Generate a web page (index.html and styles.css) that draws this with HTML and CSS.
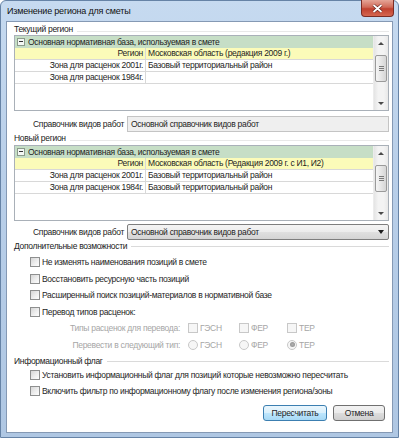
FILE: index.html
```html
<!DOCTYPE html>
<html lang="ru">
<head>
    <meta charset="UTF-8">
    <title>Изменение региона для сметы</title>
    <link rel="stylesheet" href="styles.css">
</head>
<body>
<div class="window">
    <!-- заголовок окна -->
    <div class="titlebar">
        <span class="title">Изменение региона для сметы</span>
        <div class="close">
            <svg width="11" height="9" viewBox="0 0 11 9"><path d="M1.5 1 L9.5 8 M9.5 1 L1.5 8" stroke="#5a1a14" stroke-width="3"/><path d="M1.5 1 L9.5 8 M9.5 1 L1.5 8" stroke="#fff" stroke-width="1.8"/></svg>
        </div>
    </div>

    <div class="client">
        <!-- Текущий регион -->
        <div class="group-title">Текущий регион</div>
        <div class="grid">
            <div class="grid-body">
                <div class="row head"><span class="toggle"></span>Основная нормативная база, используемая в смете</div>
                <div class="row yellow"><div class="key">Регион</div><div class="val">Московская область (редакция 2009 г.)</div></div>
                <div class="row"><div class="key">Зона для расценок 2001г.</div><div class="val">Базовый территориальный район</div></div>
                <div class="row"><div class="key">Зона для расценок 1984г.</div><div class="val"></div></div>
            </div>
            <div class="scrollbar">
                <div class="sb-btn"><span class="arrow-up"></span></div>
                <div class="sb-track"><div class="thumb"><span></span><span></span><span></span></div></div>
                <div class="sb-btn"><span class="arrow-down"></span></div>
            </div>
        </div>
        <div class="field-row">
            <span class="field-label">Справочник видов работ</span>
            <div class="textbox">Основной справочник видов работ</div>
        </div>

        <!-- Новый регион -->
        <div class="group-title tall">Новый регион</div>
        <div class="grid">
            <div class="grid-body">
                <div class="row head"><span class="toggle"></span>Основная нормативная база, используемая в смете</div>
                <div class="row yellow"><div class="key">Регион</div><div class="val">Московская область (Редакция 2009 г. с И1, И2)</div></div>
                <div class="row"><div class="key">Зона для расценок 2001г.</div><div class="val">Базовый территориальный район</div></div>
                <div class="row"><div class="key">Зона для расценок 1984г.</div><div class="val">Базовый территориальный район</div></div>
            </div>
            <div class="scrollbar">
                <div class="sb-btn"><span class="arrow-up"></span></div>
                <div class="sb-track"><div class="thumb"><span></span><span></span><span></span></div></div>
                <div class="sb-btn"><span class="arrow-down"></span></div>
            </div>
        </div>
        <div class="field-row combo-row">
            <span class="field-label">Справочник видов работ</span>
            <div class="combo">Основной справочник видов работ<span class="combo-arrow"></span></div>
        </div>

        <!-- Дополнительные возможности -->
        <div class="group-title line">Дополнительные возможности</div>
        <div class="checks">
            <div class="check"><span class="cb"></span>Не изменять наименования позиций в смете</div>
            <div class="check"><span class="cb"></span>Восстановить ресурсную часть позиций</div>
            <div class="check"><span class="cb"></span>Расширенный поиск позиций-материалов в нормативной базе</div>
            <div class="check"><span class="cb"></span>Перевод типов расценок:</div>
            <div class="check sub">
                <span class="sub-label">Типы расценок для перевода:</span>
                <span class="opt"><span class="cb off"></span>ГЭСН</span>
                <span class="opt narrow"><span class="cb off"></span>ФЕР</span>
                <span class="opt"><span class="cb off"></span>ТЕР</span>
            </div>
            <div class="check sub">
                <span class="sub-label">Перевести в следующий тип:</span>
                <span class="opt"><span class="radio"></span>ГЭСН</span>
                <span class="opt narrow"><span class="radio"></span>ФЕР</span>
                <span class="opt"><span class="radio on"></span>ТЕР</span>
            </div>
        </div>

        <!-- Информационный флаг -->
        <div class="group-title line flag">Информационный флаг</div>
        <div class="check low"><span class="cb"></span>Установить информационный флаг для позиций которые невозможно пересчитать</div>
        <div class="check low"><span class="cb"></span>Включить фильтр по информационному флагу после изменения региона/зоны</div>

        <div class="buttons">
            <button class="btn default">Пересчитать</button>
            <button class="btn">Отмена</button>
        </div>
    </div>
</div>
</body>
</html>
```

FILE: styles.css
```css
* {
    box-sizing: border-box;
}
body {
    margin: 0;
    font-family: "Liberation Sans", Arial, sans-serif;
    font-size: 8.5px;
    letter-spacing: -0.3px;
    color: #1e1e1e;
    background: #fff;
}
.window {
    width: 399px;
    height: 438px;
    border: 1px solid #6683a6;
    border-radius: 6px 6px 0 0;
    background: linear-gradient(#c6daf0, #b9cfe9 40%, #afc7e3);
    display: flex;
    flex-direction: column;
}
.titlebar {
    height: 20px;
    display: flex;
    align-items: flex-start;
    padding-left: 6px;
}
.title {
    font-size: 9px;
    letter-spacing: -0.2px;
    line-height: 20px;
    color: #111;
}
.close {
    margin-left: auto;
    margin-right: 4px;
    margin-top: -1px;
    width: 33px;
    height: 17px;
    border: 1px solid #7b2c24;
    border-top: none;
    border-radius: 0 0 4px 4px;
    background: linear-gradient(#e5a597, #d06a58 45%, #c0412f 55%, #d5664f);
    display: flex;
    align-items: center;
    justify-content: center;
}
.client {
    flex: 1;
    margin: 0 5px 4px 5px;
    border: 1px solid #8599b4;
    background: #fff;
    padding: 0 3px 0 7px;
    display: flex;
    flex-direction: column;
}
.group-title {
    height: 11px;
    margin-top: 2px;
    line-height: 11px;
    color: #222;
    display: flex;
    align-items: center;
}
.group-title::after {
    content: "";
    flex: 1;
    height: 1px;
    margin-left: 4px;
    margin-top: 3px;
    background: #e8e8e8;
}
.group-title.tall {
    height: 13px;
    margin-top: 0;
}
.group-title.line {
    height: 12px;
    margin-top: 0;
}
.group-title.line::after {
    margin-top: 0;
    background: #dadada;
}
.group-title.flag {
    margin-top: 2px;
}
.grid {
    height: 76px;
    border: 1px solid #a9b0b8;
    display: flex;
}
.grid-body {
    flex: 1;
}
.row {
    height: 12px;
    display: flex;
    border-bottom: 1px solid #d8d8d8;
    line-height: 11px;
    white-space: nowrap;
}
.row.head {
    background: #c6dec6;
    border-bottom: none;
    align-items: center;
}
.row.yellow {
    background: #fbfbb9;
}
.toggle {
    width: 8px;
    height: 8px;
    margin: 0 3px 0 2px;
    border: 1px solid #8a9a8a;
    background: #f4f8f4;
    position: relative;
}
.toggle::after {
    content: "";
    position: absolute;
    left: 1px;
    top: 2px;
    width: 4px;
    height: 1px;
    background: #333;
}
.key {
    width: 131px;
    border-right: 1px solid #d8d8d8;
    text-align: right;
    padding-right: 2px;
}
.val {
    flex: 1;
    padding-left: 2px;
}
.scrollbar {
    width: 15px;
    background: linear-gradient(90deg, #e4e4e4, #f3f3f3 30%, #f3f3f3 70%, #e8e8e8);
    border-left: 1px solid #ececec;
    display: flex;
    flex-direction: column;
}
.sb-btn {
    height: 14px;
    display: flex;
    align-items: center;
    justify-content: center;
}
.arrow-up, .arrow-down {
    width: 0;
    height: 0;
    border-left: 3px solid transparent;
    border-right: 3px solid transparent;
}
.arrow-up {
    border-bottom: 3px solid #4a4a4a;
}
.arrow-down {
    border-top: 3px solid #4a4a4a;
}
.sb-track {
    flex: 1;
    padding: 5px 1px 0 1px;
}
.thumb {
    height: 27px;
    border: 1px solid #9a9a9a;
    border-radius: 2px;
    background: linear-gradient(90deg, #f5f5f5, #e6e6e6 50%, #d6d6d6);
    display: flex;
    flex-direction: column;
    align-items: center;
    justify-content: center;
    gap: 1px;
}
.thumb span {
    width: 5px;
    height: 1px;
    background: #7a7a7a;
}
.field-row {
    height: 16px;
    margin-top: 5px;
    display: flex;
    align-items: center;
}
.field-label {
    width: 113px;
    padding-left: 19px;
    white-space: nowrap;
}
.textbox, .combo {
    flex: 1;
    height: 16px;
    line-height: 14px;
    padding-left: 3px;
    border: 1px solid #c4c4c4;
    background: #efefef;
}
.combo-row {
    margin-top: 3px;
}
.combo {
    border-color: #7e7e7e;
    border-radius: 2px;
    background: linear-gradient(#f4f4f4, #ececec 50%, #e0e0e0 50%, #d4d4d4);
    display: flex;
    align-items: center;
}
.combo-arrow {
    margin-left: auto;
    margin-right: 4px;
    width: 0;
    height: 0;
    border-left: 3.5px solid transparent;
    border-right: 3.5px solid transparent;
    border-top: 4px solid #1e1e1e;
}
.checks {
    margin-top: 1.7px;
}
.check {
    height: 16.6px;
    padding-left: 16px;
    display: flex;
    align-items: center;
    white-space: nowrap;
}
.check.low {
    height: 16px;
}
.cb {
    width: 10px;
    height: 10px;
    margin-right: 2px;
    border: 1px solid #8e8f8f;
    background: linear-gradient(135deg, #d6d6d6, #f0f0f0 60%, #fdfdfd);
}
.cb.off {
    border-color: #c8c8c8;
    background: #f6f6f6;
}
.sub {
    color: #a6a6a6;
}
.sub-label {
    width: 150px;
    text-align: right;
    margin-right: 8px;
}
.opt {
    width: 51px;
    display: flex;
    align-items: center;
}
.opt.narrow {
    width: 48px;
}
.radio {
    width: 10px;
    height: 10px;
    margin-right: 2px;
    border: 1px solid #c8c8c8;
    border-radius: 50%;
    background: #f6f6f6;
    display: flex;
    align-items: center;
    justify-content: center;
}
.radio.on::after {
    content: "";
    width: 5px;
    height: 5px;
    border-radius: 50%;
    background: radial-gradient(#b0b0b0, #8a8a8a);
}
.buttons {
    margin-top: 6px;
    display: flex;
    justify-content: flex-end;
    gap: 6px;
    padding-right: 4px;
}
.btn {
    height: 16px;
    padding: 0;
    font-family: inherit;
    font-size: 8.5px;
    letter-spacing: -0.3px;
    color: #1e1e1e;
    border: 1px solid #707070;
    border-radius: 3px;
    background: linear-gradient(#f2f2f2, #ebebeb 50%, #dddddd 50%, #cfcfcf);
    width: 52px;
}
.btn.default {
    width: 64px;
    border-color: #3c7fb1;
    background: linear-gradient(#eaf6fd, #d9f0fc 50%, #bee6fd 50%, #a7d9f5);
}
```
